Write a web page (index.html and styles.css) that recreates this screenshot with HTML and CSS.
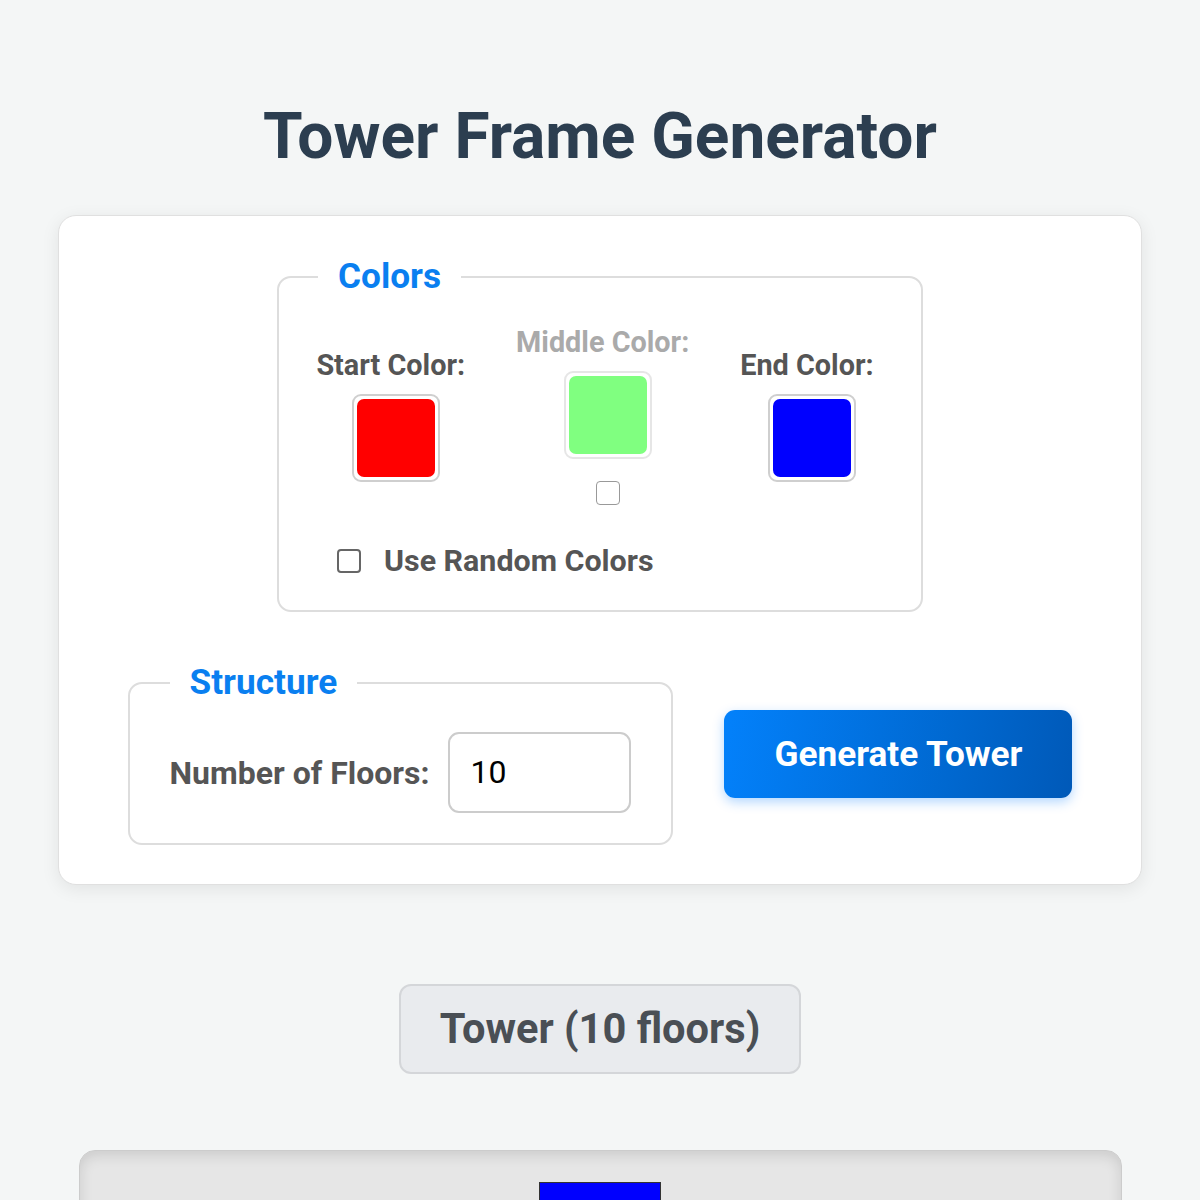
FILE: index.html
```html
<!DOCTYPE html>
<html lang="en">
<head>
<meta charset="utf-8">
<title>Tower Frame Generator</title>
<link rel="stylesheet" href="styles.css">
</head>
<body>
<h1 class="title">Tower Frame Generator</h1>
<div class="card">
  <fieldset class="group colors">
    <legend class="legend">Colors</legend>
    <div class="color-row">
      <div class="color-col">
        <span class="label">Start Color:</span>
        <span class="swatch"><span class="fill fill-red"></span></span>
      </div>
      <div class="color-col">
        <span class="label label-muted">Middle Color:</span>
        <span class="swatch swatch-muted"><span class="fill fill-green"></span></span>
        <span class="check check-small"></span>
      </div>
      <div class="color-col">
        <span class="label">End Color:</span>
        <span class="swatch"><span class="fill fill-blue"></span></span>
      </div>
    </div>
    <div class="random-row">
      <span class="check"></span>
      <span class="label label-random">Use Random Colors</span>
    </div>
  </fieldset>
  <div class="bottom-row">
    <fieldset class="group structure">
      <legend class="legend">Structure</legend>
      <div class="floors-row">
        <span class="label label-floors">Number of Floors:</span>
        <span class="num-input">10</span>
      </div>
    </fieldset>
    <button class="generate" type="button">Generate Tower</button>
  </div>
</div>
<div class="tower-label">Tower (10 floors)</div>
<div class="tower-view">
  <div class="floor"></div>
</div>
</body>
</html>
```

FILE: styles.css
```css
* { box-sizing: border-box; }
html, body { margin: 0; padding: 0; }
body {
  background: #f4f6f6;
  font-family: Roboto, "Liberation Sans", Arial, sans-serif;
  color: #333;
  overflow: hidden;
  height: 1200px;
}
.title {
  margin: 99px 0 0;
  text-align: center;
  font-size: 64px;
  font-weight: 700;
  line-height: 75px;
  color: #2c3e50;
}
.card {
  width: 1084px;
  margin: 41px auto 0;
  background: #fff;
  border: 1px solid #e0e0e0;
  border-radius: 18px;
  box-shadow: 0 4px 18px rgba(0,0,0,0.08);
  padding: 40px 0 39px;
}
.group {
  border: 2px solid #dddddd;
  border-radius: 14px;
  margin: 0;
  min-width: 0;
}
.legend {
  padding: 0 20px;
  font-size: 35.2px;
  font-weight: 700;
  line-height: 41px;
  color: #0a7ff0;
}
.colors {
  width: 646px;
  margin: 0 auto;
  padding: 28px 39px 31px;
}
.color-row {
  display: flex;
  justify-content: center;
  align-items: center;
  gap: 41px;
}
.color-col {
  display: flex;
  flex-direction: column;
  align-items: center;
}
.label {
  font-size: 28.8px;
  font-weight: 700;
  color: #555;
  line-height: 34px;
  white-space: nowrap;
}
.color-col .label { padding-right: 10px; }
.label-muted { color: #aaa; }
.label-random { font-size: 30.4px; line-height: 36px; }
.label-floors { font-size: 32px; line-height: 38px; }
.swatch {
  margin-top: 12px;
  width: 88px;
  height: 88px;
  border: 2px solid #cfcfcf;
  border-radius: 9px;
  padding: 3px;
  background: #fff;
  display: block;
}
.swatch-muted { border-color: #e6e6e6; }
.fill {
  display: block;
  width: 100%;
  height: 100%;
  border-radius: 7px;
}
.fill-red { background: #ff0000; }
.fill-green { background: #80ff80; }
.fill-blue { background: #0000ff; }
.check {
  display: block;
  width: 24px;
  height: 24px;
  border: 2px solid #666;
  border-radius: 4px;
  background: #fff;
  flex: none;
}
.check-small {
  margin-top: 22px;
  border: 1.5px solid #999;
}
.random-row {
  display: flex;
  align-items: center;
  gap: 23px;
  margin: 38px 0 0 19px;
}
.bottom-row {
  display: flex;
  justify-content: center;
  align-items: center;
  gap: 51px;
  margin-top: 50px;
}
.structure {
  padding: 29px 40px 30px;
}
.floors-row {
  display: flex;
  align-items: center;
  gap: 19px;
}
.num-input {
  display: block;
  width: 183px;
  height: 81px;
  border: 2px solid #cccccc;
  border-radius: 11px;
  padding: 0 20px;
  font-size: 32px;
  line-height: 77px;
  color: #000;
  font-weight: 400;
}
.generate {
  width: 348px;
  height: 88px;
  border: none;
  border-radius: 11px;
  background: linear-gradient(100deg, #0381fb 0%, #0068d0 65%, #0059b8 100%);
  color: #fff;
  font-family: inherit;
  font-size: 35.2px;
  font-weight: 700;
  box-shadow: 0 4px 12px rgba(0,123,255,0.3);
  padding: 0;
}
.tower-label {
  width: 402px;
  height: 90px;
  margin: 99px auto 0;
  background: #e9ebee;
  border: 2px solid #d4d6d9;
  border-radius: 12px;
  text-align: center;
  font-size: 41.6px;
  font-weight: 700;
  line-height: 86px;
  color: #4a4f55;
}
.tower-view {
  width: 1043px;
  height: 300px;
  margin: 76px auto 0;
  background: #e6e6e6;
  border: 1px solid #cccccc;
  border-radius: 16px;
  box-shadow: inset 0 4px 14px rgba(0,0,0,0.12);
  padding-top: 31px;
  display: flex;
  justify-content: center;
}
.floor {
  width: 122px;
  height: 60px;
  background: #0000ff;
  border: 1px solid #333;
}
```
